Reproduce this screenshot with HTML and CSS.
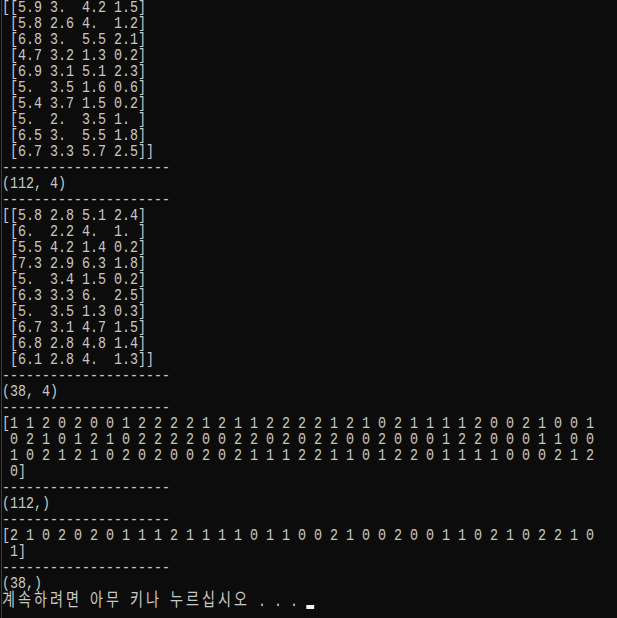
FILE: index.html
```html
<!DOCTYPE html>
<html lang="ko">
<head>
    <meta charset="UTF-8">
    <title>C:\Windows\system32\cmd.exe</title>
    <link rel="stylesheet" href="styles.css">
</head>
<body>
    <div class="console">
<pre class="out">[[5.9 3.  4.2 1.5]
 [5.8 2.6 4.  1.2]
 [6.8 3.  5.5 2.1]
 [4.7 3.2 1.3 0.2]
 [6.9 3.1 5.1 2.3]
 [5.  3.5 1.6 0.6]
 [5.4 3.7 1.5 0.2]
 [5.  2.  3.5 1. ]
 [6.5 3.  5.5 1.8]
 [6.7 3.3 5.7 2.5]]
---------------------
(112, 4)
---------------------
[[5.8 2.8 5.1 2.4]
 [6.  2.2 4.  1. ]
 [5.5 4.2 1.4 0.2]
 [7.3 2.9 6.3 1.8]
 [5.  3.4 1.5 0.2]
 [6.3 3.3 6.  2.5]
 [5.  3.5 1.3 0.3]
 [6.7 3.1 4.7 1.5]
 [6.8 2.8 4.8 1.4]
 [6.1 2.8 4.  1.3]]
---------------------
(38, 4)
---------------------
[1 1 2 0 2 0 0 1 2 2 2 2 1 2 1 1 2 2 2 2 1 2 1 0 2 1 1 1 1 2 0 0 2 1 0 0 1
 0 2 1 0 1 2 1 0 2 2 2 2 0 0 2 2 0 2 0 2 2 0 0 2 0 0 0 1 2 2 0 0 0 1 1 0 0
 1 0 2 1 2 1 0 2 0 2 0 0 2 0 2 1 1 1 2 2 1 1 0 1 2 2 0 1 1 1 1 0 0 0 2 1 2
 0]
---------------------
(112,)
---------------------
[2 1 0 2 0 2 0 1 1 1 2 1 1 1 1 0 1 1 0 0 2 1 0 0 2 0 0 1 1 0 2 1 0 2 2 1 0
 1]
---------------------
(38,)
<span class="ko">계</span><span class="ko">속</span><span class="ko">하</span><span class="ko">려</span><span class="ko">면</span> <span class="ko">아</span><span class="ko">무</span> <span class="ko">키</span><span class="ko">나</span> <span class="ko">누</span><span class="ko">르</span><span class="ko">십</span><span class="ko">시</span><span class="ko">오</span> . . . <span class="cursor"></span></pre>
    </div>
</body>
</html>
```

FILE: styles.css
```css
html, body {
    margin: 0;
    padding: 0;
    background: #0c0c0c;
    overflow: hidden;
    height: 100%;
}
.console {
    margin-left: 1px;
    border-left: 1px solid #3c3c3c;
    height: 100%;
}
.out {
    margin: 0;
    padding: 0;
    font-family: "Liberation Mono", "DejaVu Sans Mono", monospace;
    font-size: 17px;
    line-height: 16px;
    color: #c8c8c8;
    white-space: pre;
    transform: scaleX(0.7843);
    transform-origin: 0 0;
}
/* a hangul glyph fills two console cells */
.ko {
    display: inline-block;
    width: 20.4px;
    font-family: "Noto Sans CJK KR", "Noto Sans", sans-serif;
    font-size: 18px;
    line-height: 12px;
}
.cursor {
    display: inline-block;
    width: 10.2px;
    height: 4px;
    background: #f2f2f2;
    vertical-align: -3px;
}
```
